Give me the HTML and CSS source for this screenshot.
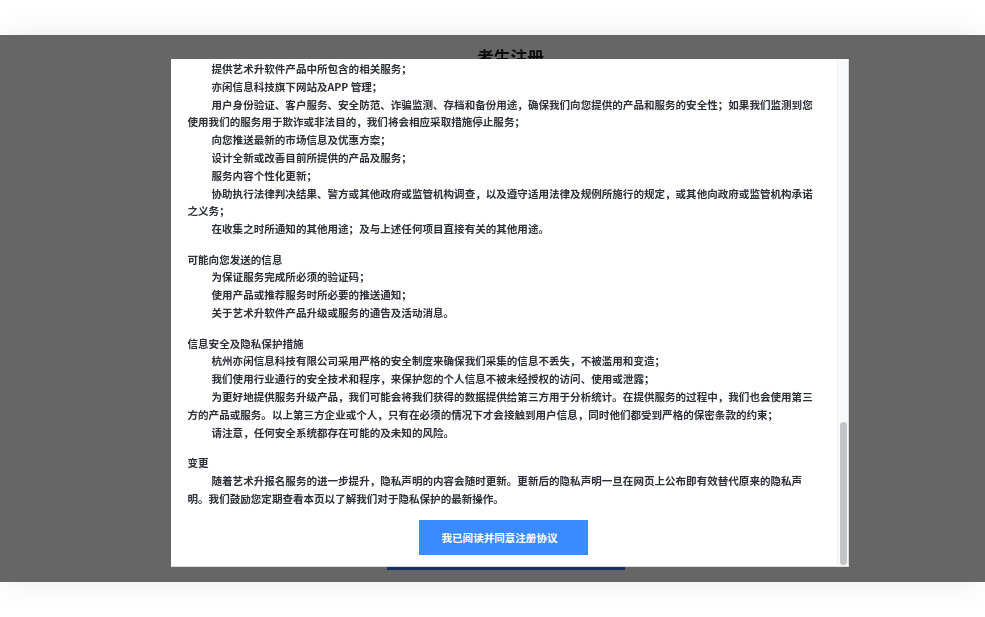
FILE: index.html
```html
<!DOCTYPE html>
<html lang="zh-CN">
<head>
<meta charset="utf-8">
<title>考生注册</title>
<link rel="stylesheet" href="styles.css">
</head>
<body>
<main class="stage">
  <h1 class="stage-title">考生注册</h1>
  <div class="stage-submit"></div>
  <div class="overlay">
    <section class="modal">
      <div class="modal-body">
        <div class="policy">
          <div class="block">
            <p class="item">提供艺术升软件产品中所包含的相关服务；</p>
            <p class="item">亦闲信息科技旗下网站及APP 管理；</p>
            <p class="item">用户身份验证、客户服务、安全防范、诈骗监测、存档和备份用途，确保我们向您提供的产品和服务的安全性；如果我们监测到您使用我们的服务用于欺诈或非法目的，我们将会相应采取措施停止服务；</p>
            <p class="item">向您推送最新的市场信息及优惠方案；</p>
            <p class="item">设计全新或改善目前所提供的产品及服务；</p>
            <p class="item">服务内容个性化更新；</p>
            <p class="item">协助执行法律判决结果、警方或其他政府或监管机构调查，以及遵守适用法律及规例所施行的规定，或其他向政府或监管机构承诺之义务；</p>
            <p class="item">在收集之时所通知的其他用途；及与上述任何项目直接有关的其他用途。</p>
          </div>
          <div class="block">
            <h2 class="heading">可能向您发送的信息</h2>
            <p class="item">为保证服务完成所必须的验证码；</p>
            <p class="item">使用产品或推荐服务时所必要的推送通知；</p>
            <p class="item">关于艺术升软件产品升级或服务的通告及活动消息。</p>
          </div>
          <div class="block">
            <h2 class="heading">信息安全及隐私保护措施</h2>
            <p class="item">杭州亦闲信息科技有限公司采用严格的安全制度来确保我们采集的信息不丢失，不被滥用和变造；</p>
            <p class="item">我们使用行业通行的安全技术和程序，来保护您的个人信息不被未经授权的访问、使用或泄露；</p>
            <p class="item">为更好地提供服务升级产品，我们可能会将我们获得的数据提供给第三方用于分析统计。在提供服务的过程中，我们也会使用第三方的产品或服务。以上第三方企业或个人，只有在必须的情况下才会接触到用户信息，同时他们都受到严格的保密条款的约束；</p>
            <p class="item">请注意，任何安全系统都存在可能的及未知的风险。</p>
          </div>
          <div class="block">
            <h2 class="heading">变更</h2>
            <p class="item">随着艺术升报名服务的进一步提升，隐私声明的内容会随时更新。更新后的隐私声明一旦在网页上公布即有效替代原来的隐私声明。我们鼓励您定期查看本页以了解我们对于隐私保护的最新操作。</p>
          </div>
        </div>
        <button class="agree" type="button">我已阅读并同意注册协议</button>
      </div>
      <div class="scroll-track"><div class="scroll-thumb"></div></div>
    </section>
  </div>
</main>
</body>
</html>
```
FILE: styles.css
```css
* { box-sizing: border-box; }
html, body { margin: 0; padding: 0; background: #fff; }
body {
  padding: 35px 0;
  height: 617px;
  overflow: hidden;
  font-family: "Noto Sans CJK SC", "Liberation Sans", sans-serif;
}
.stage {
  position: relative;
  height: 547px;
  background: #fff;
  box-shadow: 0 0 30px rgba(0, 0, 0, .08);
  display: flex;
  flex-direction: column;
  align-items: center;
}
.stage-title {
  margin: 10px 0 0 36px;
  font-size: 16.8px;
  line-height: 24px;
  font-weight: 700;
  color: #222;
  filter: blur(.4px);
}
.stage-submit {
  margin: auto 0 12px 27px;
  width: 238px;
  height: 40px;
  background: #2a7be8;
}
.overlay {
  position: absolute;
  inset: 0;
  background: rgba(0, 0, 2, .6);
}
.modal {
  position: absolute;
  left: 171px;
  top: 24px;
  width: 678px;
  height: 508px;
  background: #fff;
  display: flex;
  box-shadow: inset -1px -1px 0 #d9d9d9;
}
.modal-body {
  flex: 1;
  min-width: 0;
  display: flex;
  flex-direction: column;
  align-items: center;
  overflow: hidden;
  padding-top: 1px;
}
.policy {
  align-self: stretch;
  padding: 0 21px 0 16.5px;
  color: #2e3138;
  font-size: 10.55px;
  line-height: 17.8px;
  font-weight: 700;
  filter: blur(.45px);
}
.block { margin-bottom: 12.7px; }
.block:last-child { margin-bottom: 0; }
.heading { margin: 0; font: inherit; }
.item { margin: 0; text-indent: 24px; }
.agree {
  margin: 12.5px 1px 0 0;
  width: 169px;
  height: 35px;
  border: 0;
  padding: 0 8px 0 0;
  background: #3a8bff;
  color: #fff;
  font: 700 10.55px/35px "Noto Sans CJK SC", "Liberation Sans", sans-serif;
}
.scroll-track {
  width: 12px;
  flex: none;
  padding: 363px 2px 1px 2px;
  background: #f8f9fb;
  border-left: 1px solid #f0f0f0;
  box-shadow: inset -1px -1px 0 #d9d9d9;
}
.scroll-thumb {
  height: 143px;
  border-radius: 4px;
  background: #c4c5c6;
}
```
